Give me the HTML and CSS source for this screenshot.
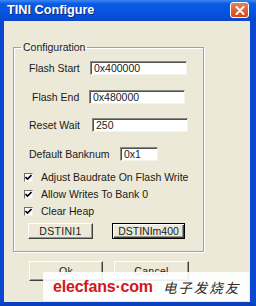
FILE: index.html
```html
<!DOCTYPE html>
<html lang="en">
<head>
    <meta charset="UTF-8">
    <meta name="viewport" content="width=device-width, initial-scale=1.0">
    <title>TINI Configure</title>
    <link rel="stylesheet" href="styles.css">
</head>
<body>
    <div class="window">
        <!-- Barra de titulo -->
        <div class="titlebar">
            <span class="title">TINI Configure</span>
            <span class="close">
                <svg width="10" height="9" viewBox="0 0 10 9"><path d="M1.5 1 L8.5 8 M8.5 1 L1.5 8" stroke="#fff" stroke-width="2" stroke-linecap="round"/></svg>
            </span>
        </div>

        <div class="client">
            <fieldset class="group">
                <legend>Configuration</legend>

                <div class="row row-start">
                    <span class="label">Flash Start</span>
                    <span class="input">0x400000</span>
                </div>
                <div class="row row-end">
                    <span class="label">Flash End</span>
                    <span class="input">0x480000</span>
                </div>
                <div class="row row-wait">
                    <span class="label">Reset Wait</span>
                    <span class="input">250</span>
                </div>
                <div class="row row-bank">
                    <span class="label">Default Banknum</span>
                    <span class="input">0x1</span>
                </div>

                <div class="checks">
                    <div class="check">
                        <span class="box"><svg width="7" height="7" viewBox="0 0 7 7"><path d="M0.5 3 L2.5 5 L6.5 1" stroke="#000" stroke-width="1.6" fill="none"/></svg></span>
                        Adjust Baudrate On Flash Write
                    </div>
                    <div class="check">
                        <span class="box"><svg width="7" height="7" viewBox="0 0 7 7"><path d="M0.5 3 L2.5 5 L6.5 1" stroke="#000" stroke-width="1.6" fill="none"/></svg></span>
                        Allow Writes To Bank 0
                    </div>
                    <div class="check">
                        <span class="box"><svg width="7" height="7" viewBox="0 0 7 7"><path d="M0.5 3 L2.5 5 L6.5 1" stroke="#000" stroke-width="1.6" fill="none"/></svg></span>
                        Clear Heap
                    </div>
                </div>

                <div class="presets">
                    <span class="btn btn-ini1">DSTINI1</span>
                    <span class="btn btn-default btn-m400">DSTINIm400</span>
                </div>
            </fieldset>

            <div class="actions">
                <span class="btn btn-ok">Ok</span>
                <span class="btn btn-cancel">Cancel</span>
            </div>
        </div>

        <!-- Marca de agua -->
        <div class="watermark">
            <span class="wm-site">elecfans·com</span>
            <span class="wm-cn">电子发烧友</span>
        </div>
    </div>
</body>
</html>
```

FILE: styles.css
```css
body {
    margin: 0;
    padding: 0;
    font-family: "Liberation Sans", Arial, sans-serif;
    font-size: 10.5px;
    color: #000;
    background-color: #1c4fcc;
}
.window {
    position: relative;
    width: 256px;
    height: 306px;
    box-sizing: border-box;
    border-left: 4px solid #0b47d0;
    border-right: 6px solid #0b47d0;
    border-bottom: 4px solid #0a3fbe;
    background-color: #ece9d8;
}
.titlebar {
    height: 21px;
    margin-left: -4px;
    margin-right: -6px;
    display: flex;
    align-items: center;
    justify-content: space-between;
    padding: 0 7px 0 7px;
    background: linear-gradient(#3d86f2, #0b5be3 18%, #0651dc 70%, #0a48c8);
}
.title {
    color: white;
    font-weight: bold;
    font-size: 12.7px;
    text-shadow: 1px 1px 0 #0a2a80;
    margin-top: -2px;
}
.close {
    width: 17px;
    height: 14px;
    margin-top: -1px;
    border: 1px solid #fff;
    border-radius: 3px;
    background: linear-gradient(#e8805a, #d8461c);
    display: flex;
    align-items: center;
    justify-content: center;
}
.client {
    height: 281px;
    padding-top: 20px;
    box-sizing: border-box;
}

/* Grupo de configuracion */
.group {
    margin: 0 0 0 9px;
    padding: 7px 0 12px 0;
    width: 191px;
    box-sizing: border-box;
    min-inline-size: 0;
    border: 1px solid #a3a294;
    box-shadow: 1px 1px 0 #fff, inset 1px 1px 0 #fff;
}
.group legend {
    margin-left: 7px;
    padding: 0 2px;
    line-height: 13px;
    color: #1a1a1a;
}
.row {
    display: flex;
    align-items: center;
    height: 14px;
    margin-top: 14.5px;
}
.row-start {
    margin-top: 0;
    padding-left: 15px;
}
.row-start .label { width: 61px; }
.row-start .input { width: 97px; }
.row-end {
    padding-left: 18px;
}
.row-end .label { width: 57px; }
.row-end .input { width: 96px; }
.row-wait {
    padding-left: 15px;
}
.row-wait .label { width: 63px; }
.row-wait .input { width: 96px; }
.row-bank {
    padding-left: 15px;
}
.row-bank .label { width: 91px; }
.row-bank .input { width: 38px; }
.label {
    white-space: nowrap;
    color: #1a1a1a;
}
.input {
    height: 14px;
    box-sizing: border-box;
    background-color: #fff;
    border-top: 1px solid #8a8a80;
    border-left: 1px solid #8a8a80;
    border-right: 1px solid #f4f4ee;
    border-bottom: 1px solid #f4f4ee;
    box-shadow: inset 1px 1px 0 #505050;
    padding-left: 3px;
    line-height: 12px;
    color: #1a1a1a;
}

/* Casillas */
.checks {
    margin-top: 8px;
}
.check {
    display: flex;
    align-items: center;
    height: 17px;
    padding-left: 10px;
    color: #1a1a1a;
}
.box {
    width: 9px;
    height: 9px;
    box-sizing: border-box;
    margin-right: 8px;
    background-color: #fff;
    border-top: 1px solid #707070;
    border-left: 1px solid #707070;
    border-right: 1px solid #f0f0f0;
    border-bottom: 1px solid #f0f0f0;
    display: flex;
    align-items: center;
    justify-content: center;
}

/* Botones */
.presets {
    display: flex;
    gap: 19px;
    margin-top: 3.5px;
    padding-left: 14px;
}
.btn {
    display: flex;
    align-items: center;
    justify-content: center;
    box-sizing: border-box;
    background-color: #ece9d8;
    border-top: 1px solid #fff;
    border-left: 1px solid #fff;
    border-right: 1px solid #404040;
    border-bottom: 1px solid #404040;
    box-shadow: inset -1px -1px 0 #9a988c;
    color: #1a1a1a;
    letter-spacing: 0.3px;
}
.btn-ini1 {
    width: 65px;
    height: 16px;
}
.btn-m400 {
    width: 73px;
    height: 16px;
}
.btn-default {
    border: 1px solid #000;
    box-shadow: inset 1px 1px 0 #fff, inset -1px -1px 0 #404040, inset -2px -2px 0 #9a988c;
    letter-spacing: 0;
}
.actions {
    display: flex;
    gap: 11px;
    margin-top: 9px;
    padding-left: 25px;
}
.btn-ok {
    width: 74px;
    height: 20px;
}
.btn-cancel {
    width: 75px;
    height: 20px;
}

/* Marca de agua encima del dialogo */
.watermark {
    position: absolute;
    left: 39px;
    top: 272px;
    width: 206px;
    height: 29px;
    background-color: rgba(255, 255, 255, 0.9);
    display: flex;
    align-items: center;
}
.wm-site {
    margin-left: 10px;
    font-size: 16px;
    font-weight: bold;
    color: #d3161e;
    letter-spacing: -0.2px;
}
.wm-cn {
    margin-left: 10px;
    font-family: "Noto Sans CJK SC", sans-serif;
    font-size: 13.5px;
    letter-spacing: 2px;
    color: #2a2a2a;
    font-style: italic;
}
```
